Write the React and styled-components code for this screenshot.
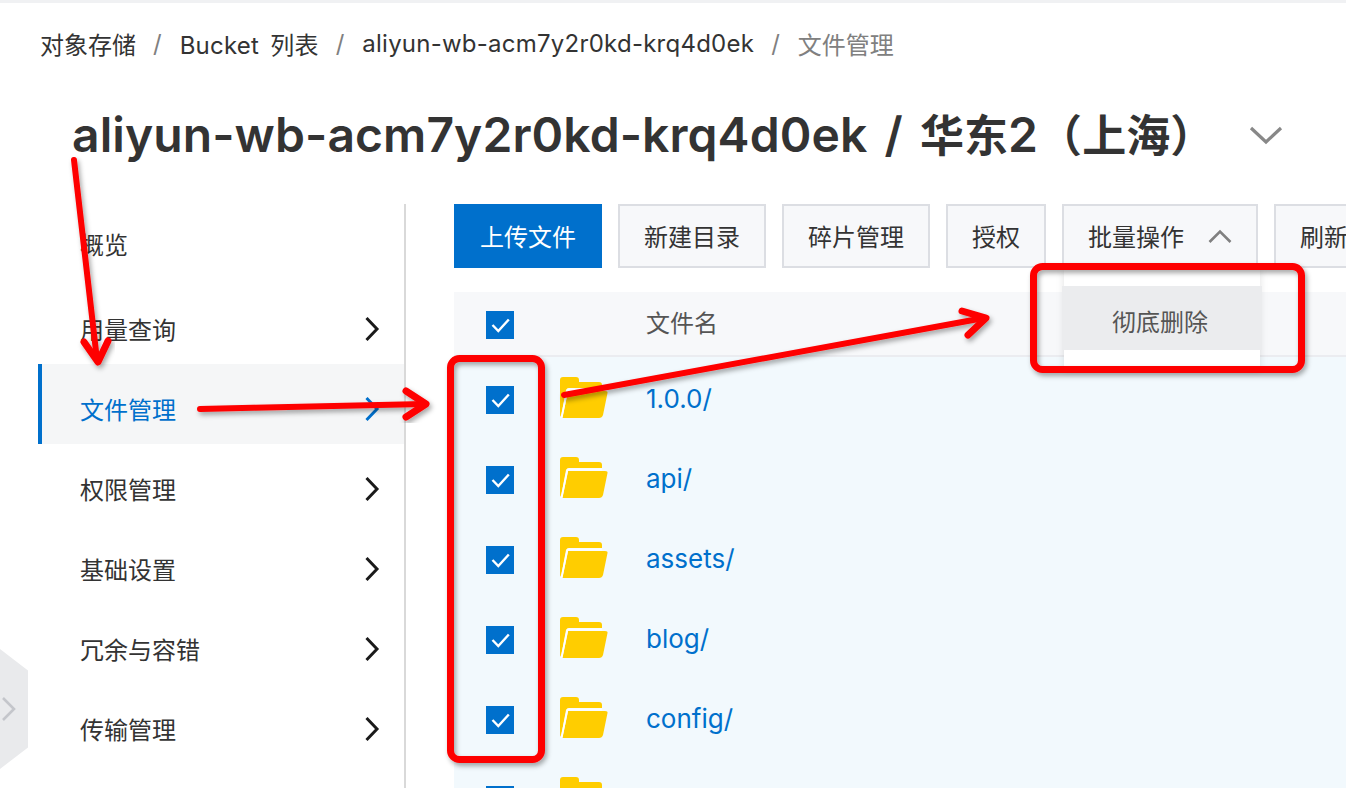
import React from "react";
import styled, { createGlobalStyle } from "styled-components";

const Global = createGlobalStyle`
  html, body { margin: 0; padding: 0; background: #fff; overflow: hidden; }
  body { font-family: "Inter", "Noto Sans CJK SC", sans-serif; color: #333; }
  #root { width: 1346px; height: 788px; overflow: hidden; }
`;

const Page = styled.div`
  position: relative;
  width: 1346px;
  height: 788px;
  overflow: hidden;
  border-top: 3px solid #f0f1f3;
  box-sizing: border-box;
`;
const Breadcrumb = styled.nav`
  display: flex;
  align-items: center;
  height: 34px;
  margin: 23px 0 0 40px;
  font-size: 24px;
  color: #333;
  white-space: nowrap;
`;
const Crumb = styled.span`
  color: ${(p) => (p.$last ? "#808080" : "#333")};
  letter-spacing: ${(p) => (p.$latin ? "0.24px" : "0")};
  word-spacing: ${(p) => (p.$latin ? "4px" : "0")};
`;
const Sep = styled.span`
  color: #808080;
  margin: 0 18px 0 17px;
`;
const TitleRow = styled.div`
  display: flex;
  align-items: center;
  height: 60px;
  margin: 45px 0 0 72px;
`;
const Title = styled.h1`
  margin: 0;
  font-size: 48px;
  line-height: 60px;
  font-weight: 600;
  color: #333;
  white-space: nowrap;
  letter-spacing: 0.08px;
  word-spacing: 5px;
`;
const TitleCjk = styled.span`
  font-size: 44px;
`;
const TitleCaret = styled.svg`
  margin-left: 35px;
  flex: none;
`;
const Body = styled.div`
  display: flex;
  margin-top: 39px;
  padding-left: 38px;
`;
const Sidebar = styled.aside`
  width: 366px;
  height: 600px;
  flex: none;
  border-right: 2px solid #d9d9d9;
`;
const NavItem = styled.div`
  display: flex;
  align-items: center;
  justify-content: space-between;
  box-sizing: border-box;
  height: 80px;
  padding: ${(p) => (p.$first ? "0 0 2px" : "8px 24px 0")};
  padding-left: ${(p) => (p.$active ? "38px" : "42px")};
  font-size: 24px;
  color: ${(p) => (p.$active ? "#0070cc" : "#333")};
  background: ${(p) => (p.$active ? "#f5f6f7" : "transparent")};
  border-left: ${(p) => (p.$active ? "4px solid #0070cc" : "none")};
`;
const Chevron = styled.svg`
  flex: none;
  transform: translateY(1px);
`;
const Main = styled.main`
  margin-left: 48px;
  flex: 1;
  min-width: 0;
`;
const Toolbar = styled.div`
  display: flex;
  gap: 16px;
  white-space: nowrap;
`;
const Button = styled.div`
  display: flex;
  align-items: center;
  justify-content: center;
  flex: none;
  box-sizing: border-box;
  height: 64px;
  padding-bottom: 2px;
  width: ${(p) => p.$w}px;
  font-size: 24px;
  color: ${(p) => (p.$primary ? "#fff" : "#333")};
  background: ${(p) => (p.$primary ? "#0070cc" : "#f7f8fa")};
  border: ${(p) => (p.$primary ? "none" : "2px solid #dcdee3")};
`;
const RefreshBtn = styled(Button)`
  justify-content: flex-start;
  padding-left: 24px;
`;
const ButtonCaret = styled.svg`
  margin-left: 24px;
  margin-top: 2px;
`;
const Table = styled.div`
  margin-top: 24px;
`;
const HeadRow = styled.div`
  display: flex;
  align-items: center;
  box-sizing: border-box;
  height: 65px;
  background: #f7f8fa;
  border-bottom: 2px solid #ebecf0;
  font-size: 24px;
  color: #555;
`;
const HeadLabel = styled.span`
  margin-left: 132px;
  margin-bottom: 5px;
`;
const Row = styled.div`
  display: flex;
  align-items: center;
  height: 80px;
  background: #f2f9fd;
`;
const RowName = styled.span`
  margin-left: 38px;
  font-size: 26px;
  color: #0070cc;
  margin-top: 3px;
`;
const Check = styled.span`
  display: block;
  width: 28px;
  height: 28px;
  margin-left: 32px;
  margin-top: ${(p) => p.$top}px;
  flex: none;
  background: #0070cc;
`;
const TickMark = styled.svg`
  display: block;
`;
const Folder = styled.svg`
  margin-left: 46px;
  flex: none;
`;
const Menu = styled.div`
  position: absolute;
  left: 1064px;
  top: 265px;
  width: 196px;
  height: 100px;
  padding-top: 18px;
  box-sizing: border-box;
  background: #fff;
  box-shadow: 0 2px 8px rgba(0, 0, 0, 0.12);
`;
const MenuItem = styled.div`
  display: flex;
  align-items: center;
  justify-content: center;
  box-sizing: border-box;
  height: 64px;
  margin: 0 -2px;
  padding: 4px 4px 0 0;
  background: #ebecee;
  font-size: 24px;
  color: #555;
`;
const SideHandle = styled.div`
  position: absolute;
  left: 0;
  top: 646px;
  width: 28px;
  height: 120px;
  background: #e9eaec;
  clip-path: polygon(0 0, 100% 18%, 100% 82%, 0 100%);
  display: flex;
  align-items: center;
`;
const Overlay = styled.svg`
  position: absolute;
  left: 0;
  top: -3px;
  pointer-events: none;
`;

const Right = ({ color = "#1a1a1a" }) => (
  <Chevron width="16" height="26" viewBox="0 0 16 26" fill="none">
    <path d="M2.5 2 L13 13 L2.5 24" stroke={color} strokeWidth="3" />
  </Chevron>
);
const Tick = () => (
  <TickMark width="28" height="28" viewBox="0 0 28 28" fill="none">
    <path d="M6.5 14 L12.3 20 L22.8 8.5" stroke="#fff" strokeWidth="2.4" />
  </TickMark>
);
const FolderIcon = () => (
  <Folder width="48" height="41" viewBox="0 0 48 41">
    <path d="M0 3 Q0 0 3 0 H16 Q19 0 19 3 V5 H39 Q42 5 42 8 V11 H9 Q7 11 6 13 L1 40 Q0 39 0 37 Z" fill="#ffcd00" />
    <path d="M8 14 H45 Q48 14 47.5 16 L43 38 Q42 41 39 41 H2.5 Z" fill="#ffcd00" />
    <path d="M7.5 12.5 H42 M7.5 12.5 L1.5 40.5" stroke="#fff" strokeWidth="1.8" fill="none" />
  </Folder>
);

const nav = ["概览", "用量查询", "文件管理", "权限管理", "基础设置", "冗余与容错", "传输管理"];
const rows = ["1.0.0/", "api/", "assets/", "blog/", "config/", ""];

const Arrow = ({ d, head }) => (
  <g filter="url(#sh)" fill="none" stroke="#fe0000" strokeLinecap="round" strokeLinejoin="round">
    <path d={d} strokeWidth="6" />
    <path d={head} strokeWidth="7" />
  </g>
);

export default function App() {
  return (
    <Page>
      <Global />
      <Breadcrumb>
        <Crumb>对象存储</Crumb>
        <Sep>/</Sep>
        <Crumb $latin>Bucket 列表</Crumb>
        <Sep>/</Sep>
        <Crumb $latin>aliyun-wb-acm7y2r0kd-krq4d0ek</Crumb>
        <Sep>/</Sep>
        <Crumb $last>文件管理</Crumb>
      </Breadcrumb>
      <TitleRow>
        <Title>
          aliyun-wb-acm7y2r0kd-krq4d0ek / <TitleCjk>华东</TitleCjk>2<TitleCjk>（上海）</TitleCjk>
        </Title>
        <TitleCaret width="34" height="20" viewBox="0 0 34 20" fill="none">
          <path d="M2 3 L17 17 L32 3" stroke="#888" strokeWidth="3.2" />
        </TitleCaret>
      </TitleRow>
      <Body>
        <Sidebar>
          {nav.map((n, i) => (
            <NavItem key={n} $active={i === 2} $first={i === 0}>
              {n}
              {i > 0 && <Right color={i === 2 ? "#0070cc" : "#1a1a1a"} />}
            </NavItem>
          ))}
        </Sidebar>
        <Main>
          <Toolbar>
            <Button $primary $w={148}>上传文件</Button>
            <Button $w={148}>新建目录</Button>
            <Button $w={148}>碎片管理</Button>
            <Button $w={100}>授权</Button>
            <Button $w={196}>
              批量操作
              <ButtonCaret width="24" height="14" viewBox="0 0 24 14" fill="none">
                <path d="M1.5 13 L12 2.5 L22.5 13" stroke="#808080" strokeWidth="2.6" />
              </ButtonCaret>
            </Button>
            <RefreshBtn $w={100}>刷新</RefreshBtn>
          </Toolbar>
          <Table>
            <HeadRow>
              <Check $top={3}><Tick /></Check>
              <HeadLabel>文件名</HeadLabel>
            </HeadRow>
            {rows.map((r, i) => (
              <Row key={i}>
                <Check $top={6}><Tick /></Check>
                <FolderIcon />
                <RowName>{r}</RowName>
              </Row>
            ))}
          </Table>
        </Main>
      </Body>
      <Menu>
        <MenuItem>彻底删除</MenuItem>
      </Menu>
      <SideHandle>
        <svg width="16" height="28" viewBox="0 0 16 28" fill="none">
          <path d="M3 3 L14 14 L3 25" stroke="#c4c6cb" strokeWidth="2.6" />
        </svg>
      </SideHandle>
      <Overlay width="1346" height="788" viewBox="0 0 1346 788">
        <defs>
          <filter id="sh" x="-20%" y="-20%" width="140%" height="140%">
            <feDropShadow dx="2" dy="3" stdDeviation="2.5" floodColor="#000" floodOpacity="0.35" />
          </filter>
        </defs>
        <Arrow d="M74 160 L97 360" head="M84 342 L98 362 L108 341" />
        <Arrow d="M200 409 L424 404" head="M406 391 L426 404 L406 417" />
        <Arrow d="M564 395 L984 318" head="M962 311 L986 318 L968 335" />
        <g filter="url(#sh)" fill="none" stroke="#fe0000" strokeWidth="7">
          <rect x="450.5" y="358.5" width="91" height="401" rx="9" />
          <rect x="1033.5" y="266.5" width="268" height="103" rx="9" />
        </g>
      </Overlay>
    </Page>
  );
}
